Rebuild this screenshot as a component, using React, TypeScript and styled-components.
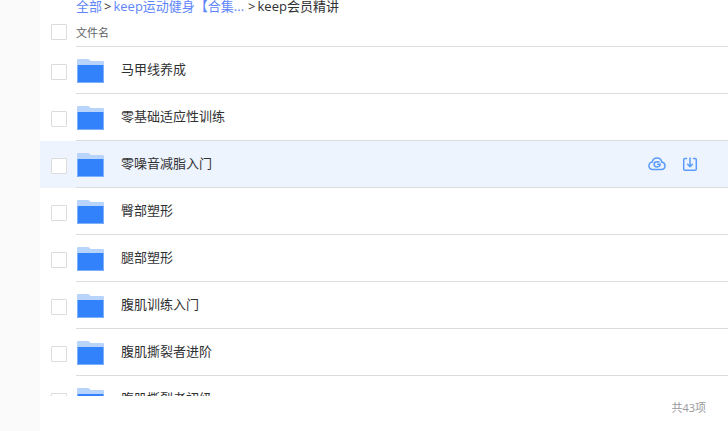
import React from "react";
import styled, { createGlobalStyle } from "styled-components";

const GlobalStyle = createGlobalStyle`
  *, *::before, *::after { box-sizing: border-box; }
  body {
    margin: 0;
    background: #fff;
    color: #303133;
    font-family: "Open Sans", "Noto Sans CJK SC", sans-serif;
    font-size: 13px;
  }
`;

const Page = styled.div`
  display: flex;
  height: 100vh;
  overflow: hidden;
`;

const SideStrip = styled.aside`
  flex: 0 0 40px;
  background: #fafafa;
`;

const Main = styled.main`
  flex: 1;
  min-width: 0;
  display: flex;
  flex-direction: column;
`;

const Breadcrumb = styled.nav`
  flex: none;
  display: flex;
  gap: 2px;
  padding: 0 36px;
  line-height: 13px;
  height: 18px;
  white-space: nowrap;
`;

const Crumb = styled.a`
  color: #5e86fb;
  text-decoration: none;
`;

const LongCrumb = styled(Crumb)`
  margin-right: 2px;
`;

const Row = styled.li<{ $active?: boolean }>`
  display: grid;
  grid-template-columns: 36px 1fr;
  height: 47px;
  background: ${(p) => (p.$active ? "#edf4fe" : "transparent")};
`;

const HeaderRow = styled.div`
  flex: none;
  display: grid;
  grid-template-columns: 36px 1fr;
  height: 29px;
`;

const CheckCell = styled.span`
  display: flex;
  align-items: center;
  padding: 3px 0 0 11px;
`;

const HeaderCheckCell = styled(CheckCell)`
  padding: 0 0 1px 11px;
`;

const CheckBox = styled.input`
  appearance: none;
  width: 16px;
  height: 16px;
  margin: 0;
  border: 1px solid #dcdcdc;
  border-radius: 1px;
  background: #fff;
  &:checked { background: #3282fb; }
`;

const Cell = styled.div`
  display: flex;
  align-items: center;
  min-width: 0;
  border-bottom: 1px solid #dcdcdc;
`;

const HeaderCell = styled(Cell)`
  color: #606266;
  font-size: 11px;
`;

const List = styled.ul`
  flex: 1;
  min-height: 0;
  margin: 0;
  padding: 0;
  list-style: none;
  overflow: hidden;
`;

const FileName = styled.label`
  flex: 1;
  margin-left: 16px;
  padding-bottom: 2px;
  line-height: 18px;
`;

const Actions = styled.div`
  display: flex;
  gap: 16px;
  padding-right: 30px;
`;

const IconButton = styled.button`
  display: flex;
  padding: 0;
  border: 0;
  background: none;
  cursor: pointer;
`;

const Footer = styled.footer`
  flex: 0 0 35px;
  padding: 4px 22px 0 0;
  color: #98999c;
  font-size: 11px;
  line-height: 16px;
  text-align: right;
`;

const Folder = () => (
  <svg width="29" height="26" viewBox="0 0 29 26" aria-hidden="true">
    <path d="M1 3.2Q1 2 2.2 2H12Q12.8 2 13.3 2.6L14.6 4H26.8Q28 4 28 5.2V10H1Z" fill="#b9d4fa" />
    <path d="M1 8H28V25Q28 26 27 26H2Q1 26 1 25Z" fill="#3282fb" />
    <path d="M1.5 8V25Q1.5 25.5 2 25.5H27Q27.5 25.5 27.5 25V8" fill="none" stroke="#7fb0fb" strokeWidth="1" />
  </svg>
);

const CloudIcon = () => (
  <svg width="18" height="16" viewBox="0 0 18 16" fill="none" stroke="#5b9bfb" strokeWidth="1.5" strokeLinecap="round" aria-hidden="true">
    <path d="M4.3 6.1C4.6 3.6 6.5 2 9 2s4.4 1.6 4.7 4.1c2 .3 3.3 1.7 3.3 3.7 0 2.2-1.5 3.7-3.7 3.7H4.7C2.5 13.5 1 12 1 9.8c0-2 1.3-3.4 3.3-3.7Z" />
    <path d="M11 6C10.4 5.8 9.8 5.7 9.2 5.7 7.4 5.7 6.1 6.7 6.1 8.3S7.4 10.9 9.1 10.9c1.9 0 3-1 3.1-2.6H9.6" />
  </svg>
);

const DownloadIcon = () => (
  <svg width="16" height="16" viewBox="0 0 16 16" fill="none" stroke="#5b9bfb" strokeWidth="1.5" strokeLinecap="round" strokeLinejoin="round" aria-hidden="true">
    <path d="M4.6 2.4H3Q1.7 2.4 1.7 3.7V13Q1.7 14.3 3 14.3H13Q14.3 14.3 14.3 13V3.7Q14.3 2.4 13 2.4H11.4" />
    <path d="M8 2V10.4M5.6 8.2 8 10.6 10.4 8.2" />
  </svg>
);

const folders = [
  "马甲线养成",
  "零基础适应性训练",
  "零噪音减脂入门",
  "臀部塑形",
  "腿部塑形",
  "腹肌训练入门",
  "腹肌撕裂者进阶",
  "腹肌撕裂者初级",
];

const activeFolder = "零噪音减脂入门";

export default function App() {
  return (
    <>
      <GlobalStyle />
      <Page>
        <SideStrip />
        <Main>
          <Breadcrumb>
            <Crumb href="#all">全部</Crumb>
            <span>&gt;</span>
            <LongCrumb href="#keep">keep运动健身【合集...</LongCrumb>
            <span>&gt;</span>
            <span>keep会员精讲</span>
          </Breadcrumb>
          <HeaderRow>
            <HeaderCheckCell>
              <CheckBox type="checkbox" id="select-all" />
            </HeaderCheckCell>
            <HeaderCell>
              <label htmlFor="select-all">文件名</label>
            </HeaderCell>
          </HeaderRow>
          <List>
            {folders.map((name, i) => (
              <Row key={name} $active={name === activeFolder}>
                <CheckCell>
                  <CheckBox type="checkbox" id={`folder-${i}`} />
                </CheckCell>
                <Cell>
                  <Folder />
                  <FileName htmlFor={`folder-${i}`}>{name}</FileName>
                  {name === activeFolder && (
                    <Actions>
                      <IconButton type="button" aria-label="转存">
                        <CloudIcon />
                      </IconButton>
                      <IconButton type="button" aria-label="下载">
                        <DownloadIcon />
                      </IconButton>
                    </Actions>
                  )}
                </Cell>
              </Row>
            ))}
          </List>
          <Footer>共43项</Footer>
        </Main>
      </Page>
    </>
  );
}
